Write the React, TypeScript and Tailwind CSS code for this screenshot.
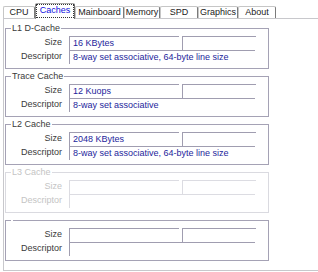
import React from 'react';

type Group = {
  name: string;
  size: string;
  desc: string;
  disabled?: boolean;
};

const tabs = [
  { label: 'CPU', w: 'w-[32px]' },
  { label: 'Caches', w: 'w-[40px]', active: true },
  { label: 'Mainboard', w: 'w-[49px]' },
  { label: 'Memory', w: 'w-[36px]' },
  { label: 'SPD', w: 'w-[38px]' },
  { label: 'Graphics', w: 'w-[40px]' },
  { label: 'About', w: 'w-[38px]' },
];

const groups: Group[] = [
  { name: 'L1 D-Cache', size: '16 KBytes', desc: '8-way set associative, 64-byte line size' },
  { name: 'Trace Cache', size: '12 Kuops', desc: '8-way set associative' },
  { name: 'L2 Cache', size: '2048 KBytes', desc: '8-way set associative, 64-byte line size' },
  { name: 'L3 Cache', size: '', desc: '', disabled: true },
  { name: '', size: '', desc: '' },
];

function Field({ value, width, disabled }: { value: string; width: string; disabled?: boolean }) {
  return (
    <div
      className={`${width} h-[14px] border-t border-l pl-[3px] leading-[13px] whitespace-nowrap overflow-hidden text-[#1e1e9c] ${
        disabled ? 'border-[#dcdce2]' : 'border-[#a09db0]'
      }`}
    >
      {value}
    </div>
  );
}

function CacheGroup({ group }: { group: Group }) {
  const labelColor = group.disabled ? 'text-[#c4c4c4]' : 'text-[#3a3a3a]';
  return (
    <fieldset
      className={`w-[264px] mt-[2px] ml-[1px] border pt-[3px] pb-[4px] ${
        group.disabled ? 'border-[#dadae0]' : 'border-[#a5a2b5]'
      }`}
    >
      <legend className={`ml-[5px] px-[1px] h-[10px] leading-[10px] ${labelColor}`}>{group.name}</legend>
      <div className="flex items-center">
        <div className={`w-[56px] text-right ${labelColor}`}>Size</div>
        <div className="ml-[7px] flex">
          <Field value={group.size} width="w-[110px]" disabled={group.disabled} />
          <div className="ml-[3px]">
            <Field value="" width="w-[74px]" disabled={group.disabled} />
          </div>
        </div>
      </div>
      <div className="flex items-center">
        <div className={`w-[56px] text-right ${labelColor}`}>Descriptor</div>
        <div className="ml-[7px]">
          <Field value={group.desc} width="w-[186px]" disabled={group.disabled} />
        </div>
      </div>
    </fieldset>
  );
}

export default function App() {
  return (
    <div className="w-[318px] h-[272px] bg-white overflow-hidden text-[9px] font-['Liberation_Sans',Arial,sans-serif]">
      {/* Tabs */}
      <div className="flex items-end h-[18px] pl-[3px]">
        {tabs.map((t) =>
          t.active ? (
            <div
              key={t.label}
              className={`${t.w} relative z-10 h-[16px] -mb-[1px] bg-white border-l border-t border-r border-l-[#8a8a8a] border-t-[#a8a8a8] border-r-[#6e6e6e] rounded-t-[2px]`}
            >
              <div className="h-[14px] border border-dotted border-[#333] flex items-center justify-center text-[#1010e0]">
                {t.label}
              </div>
            </div>
          ) : (
            <div
              key={t.label}
              className={`${t.w} h-[12px] bg-white border-l border-t border-r border-l-[#c6c6c6] border-t-[#c6c6c6] border-r-[#7b7b7b] rounded-t-[2px] flex items-center justify-center leading-[11px] text-[#222]`}
            >
              {t.label}
            </div>
          )
        )}
      </div>

      {/* Panel */}
      <div className="h-[253px] ml-[3px] border-t border-l border-b border-[#c8c8cc] pt-[2px]">
        {groups.map((g, i) => (
          <CacheGroup key={i} group={g} />
        ))}
      </div>
    </div>
  );
}
